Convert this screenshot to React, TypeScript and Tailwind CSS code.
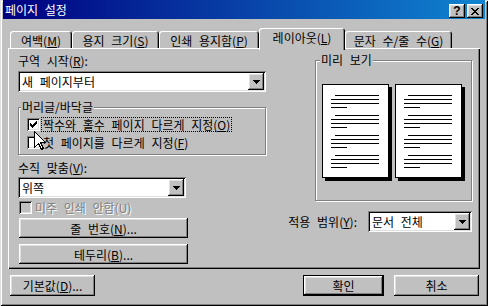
import React from "react";

const RAISED =
  "shadow-[inset_-1px_-1px_#000,inset_1px_1px_#fff,inset_-2px_-2px_#808080,inset_2px_2px_#dfdfdf]";
const SUNKEN =
  "shadow-[inset_1px_1px_#808080,inset_-1px_-1px_#fff,inset_2px_2px_#000,inset_-2px_-2px_#dfdfdf]";
const ETCHED = "border border-[#808080] shadow-[inset_1px_1px_#fff,1px_1px_#fff]";

function U({ children }: { children: React.ReactNode }) {
  return <span className="underline decoration-1 underline-offset-[1px]">{children}</span>;
}

function Arrow() {
  return (
    <svg width="7" height="4" viewBox="0 0 7 4" shapeRendering="crispEdges">
      <path d="M0 0h7v1H0zM1 1h5v1H1zM2 2h3v1H2zM3 3h1v1H3z" fill="#000" />
    </svg>
  );
}

function Select({ text, w }: { text: string; w: string }) {
  return (
    <div className={`flex h-[21px] bg-white ${SUNKEN} ${w}`}>
      <div className="flex flex-1 items-center pl-[4px] whitespace-nowrap">{text}</div>
      <div className={`mt-[2px] mr-[2px] flex h-[17px] w-[16px] items-center justify-center bg-[#c0c0c0] ${RAISED}`}>
        <Arrow />
      </div>
    </div>
  );
}

function Check({ checked, disabled }: { checked?: boolean; disabled?: boolean }) {
  return (
    <div
      className={`flex h-[13px] w-[13px] shrink-0 items-center justify-center ${
        disabled ? "bg-[#c0c0c0]" : "bg-white"
      } ${SUNKEN}`}
    >
      {checked && (
        <svg width="7" height="7" viewBox="0 0 7 7" shapeRendering="crispEdges">
          <path
            d="M6 0h1v1H6zM5 1h2v1H5zM0 2h1v1H0zM4 2h3v1H4zM0 3h2v1H0zM3 3h3v1H3zM0 4h5v1H0zM1 5h3v1H1zM2 6h1v1H2z"
            fill="#000"
          />
        </svg>
      )}
    </div>
  );
}

function Button({ children, w, def }: { children: React.ReactNode; w: string; def?: boolean }) {
  return (
    <div
      className={`flex h-[21px] items-center justify-center bg-[#c0c0c0] whitespace-nowrap ${w} ${
        def ? "border border-black" : ""
      } ${RAISED}`}
    >
      {children}
    </div>
  );
}

function Tab({ children, w, active }: { children: React.ReactNode; w: string; active?: boolean }) {
  return (
    <div
      className={`flex items-center justify-center rounded-t-[3px] bg-[#c0c0c0] whitespace-nowrap shadow-[inset_1px_1px_#fff,inset_-1px_0_#000,inset_-2px_0_#808080] ${w} ${
        active ? "relative z-10 mb-[-2px] h-[22px] pb-[3px]" : "h-[17px] pt-[1px]"
      }`}
    >
      {children}
    </div>
  );
}

function PageLines() {
  return (
    <div className="flex flex-col gap-[3px]">
      <div className="ml-[4px] h-[1px] w-[44px] bg-black" />
      <div className="h-[1px] w-[48px] bg-black" />
      <div className="h-[1px] w-[48px] bg-black" />
      <div className="h-[1px] w-[16px] bg-black" />
    </div>
  );
}

function Page() {
  return (
    <div className="flex h-[94px] w-[67px] flex-col gap-[7px] border border-black bg-white pt-[10px] pl-[8px] shadow-[3px_3px_0_#000]">
      <PageLines />
      <PageLines />
      <PageLines />
      <PageLines />
    </div>
  );
}

export default function App() {
  return (
    <div className="relative flex h-[306px] w-[488px] flex-col bg-[#c0c0c0] px-[3px] pb-[3px] font-[family-name:'Noto_Sans_CJK_KR',sans-serif] text-[12px] leading-[13px] text-black [word-spacing:4px] shadow-[inset_1px_1px_#dfdfdf,inset_-1px_-1px_#000,inset_2px_2px_#fff,inset_-2px_-2px_#808080]">
      {/* Title bar */}
      <div className="flex h-[19px] items-center justify-between bg-[linear-gradient(90deg,#000080,#1084d0)] pl-[2px] pr-[2px] text-white">
        <span>페이지 설정</span>
        <div className="mt-[3px] flex gap-[2px]">
          <div className={`flex h-[14px] w-[16px] items-center justify-center bg-[#c0c0c0] text-black ${RAISED}`}>
            <span className="font-[family-name:'Liberation_Sans',sans-serif] text-[12px] leading-none font-bold">?</span>
          </div>
          <div className={`flex h-[14px] w-[16px] items-center justify-center bg-[#c0c0c0] ${RAISED}`}>
            <svg width="8" height="7" viewBox="0 0 8 7" shapeRendering="crispEdges">
              <path
                d="M0 0h2v1H0zM6 0h2v1H6zM1 1h2v1H1zM5 1h2v1H5zM2 2h4v1H2zM3 3h2v1H3zM2 4h4v1H2zM1 5h2v1H1zM5 5h2v1H5zM0 6h2v1H0zM6 6h2v1H6z"
                fill="#000"
              />
            </svg>
          </div>
        </div>
      </div>

      {/* Body */}
      <div className="flex flex-col px-[5px] pt-[9px]">
        {/* Tabs */}
        <div className="flex h-[20px] items-end pl-[2px]">
          <Tab w="w-[62px]">
            여백(<U>M</U>)
          </Tab>
          <Tab w="w-[87px]">
            용지 크기(<U>S</U>)
          </Tab>
          <Tab w="w-[100px]">
            인쇄 용지함(<U>P</U>)
          </Tab>
          <Tab w="w-[86px]" active>
            레이아웃(<U>L</U>)
          </Tab>
          <Tab w="w-[107px]">
            문자 수/줄 수(<U>G</U>)
          </Tab>
        </div>

        {/* Panel */}
        <div className="flex h-[221px] bg-[#c0c0c0] pl-[10px] pr-[8px] shadow-[inset_1px_1px_#fff,inset_-1px_-1px_#000,inset_-2px_-2px_#808080]">
          {/* Left column */}
          <div className="flex w-[248px] flex-col pt-[6px]">
            <div className="h-[13px]">
              구역 시작(<U>R</U>):
            </div>
            <div className="mt-[4px]">
              <Select text="새 페이지부터" w="w-[248px]" />
            </div>

            <div className={`relative mt-[15px] h-[48px] ${ETCHED} pt-[9px] pl-[8px]`}>
              <span className="absolute top-[-8px] left-[2px] bg-[#c0c0c0] px-[1px]">머리글/바닥글</span>
              <div className="flex h-[15px] items-center">
                <Check checked />
                <span className="ml-[1px] border border-dotted border-black px-[1px]">
                  짝수와 홀수 페이지 다르게 지정(<U>O</U>)
                </span>
              </div>
              <div className="mt-[3px] flex h-[15px] items-center">
                <Check />
                <span className="ml-[2px] px-[1px]">
                  첫 페이지를 다르게 지정(<U>F</U>)
                </span>
              </div>
            </div>

            <div className="mt-[6px] h-[13px]">
              수직 맞춤(<U>V</U>):
            </div>
            <div className="mt-[3px]">
              <Select text="위쪽" w="w-[168px]" />
            </div>

            <div className="mt-[3px] ml-[1px] flex h-[13px] items-center">
              <Check disabled />
              <span className="ml-[3px] text-[#808080] [text-shadow:1px_1px_0_#fff]">미주 인쇄 안함(U)</span>
            </div>

            <div className="mt-[4px] ml-[1px]">
              <div
                className={`flex h-[20px] w-[169px] items-center justify-center bg-[#c0c0c0] ${RAISED}`}
              >
                줄 번호(<U>N</U>)...
              </div>
            </div>
            <div className="mt-[6px] ml-[1px]">
              <div
                className={`flex h-[20px] w-[169px] items-center justify-center bg-[#c0c0c0] ${RAISED}`}
              >
                테두리(<U>B</U>)...
              </div>
            </div>
          </div>

          {/* Right column */}
          <div className="ml-[15px] flex w-[191px] flex-col items-end pt-[12px]">
            <div className={`relative h-[141px] w-[157px] ${ETCHED} pt-[23px] pl-[6px]`}>
              <span className="absolute top-[-8px] left-[4px] bg-[#c0c0c0] px-[1px]">미리 보기</span>
              <div className="flex gap-[6px]">
                <Page />
                <Page />
              </div>
            </div>
            <div className="mt-[10px] flex items-center gap-[11px]">
              <span>
                적용 범위(<U>Y</U>):
              </span>
              <Select text="문서 전체" w="w-[104px]" />
            </div>
          </div>
        </div>

        {/* Bottom buttons */}
        <div className="mt-[6px] flex pl-[2px] pr-[1px]">
          <Button w="w-[85px]">
            기본값(<U>D</U>)...
          </Button>
          <div className="flex-1" />
          <Button w="w-[81px]" def>
            확인
          </Button>
          <div className="w-[10px]" />
          <Button w="w-[85px]">취소</Button>
        </div>
      </div>

      {/* Mouse cursor */}
      <svg
        className="absolute top-[131px] left-[34px] z-20"
        width="13"
        height="20"
        viewBox="0 0 13 20"
        shapeRendering="crispEdges"
      >
        <path d="M0.5 0.5L0.5 16.5L4.5 12.5L7.5 18.5L9.5 17.5L6.5 11.5L11.5 11.5Z" fill="#fff" stroke="#000" strokeWidth="1" />
      </svg>
    </div>
  );
}
